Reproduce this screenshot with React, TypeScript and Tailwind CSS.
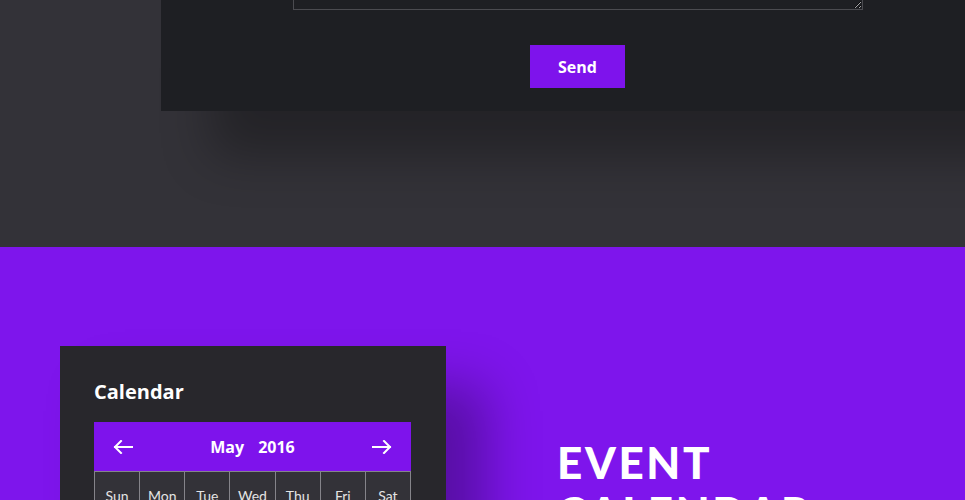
import React from "react";

const DAYS = ["Sun", "Mon", "Tue", "Wed", "Thu", "Fri", "Sat"];

const Arrow = ({ dir }: { dir: "left" | "right" }) => (
  <svg width="20" height="14" viewBox="0 0 20 14" fill="none" stroke="white" strokeWidth="2" strokeLinecap="square">
    {dir === "left" ? (
      <>
        <path d="M2 7h17" />
        <path d="M8 1L2 7l6 6" />
      </>
    ) : (
      <>
        <path d="M1 7h17" />
        <path d="M12 1l6 6-6 6" />
      </>
    )}
  </svg>
);

const App = () => {
  return (
    <div className="w-full overflow-hidden font-['Lato',sans-serif]">
      {/* Contact form tail */}
      <section className="h-[247px] bg-[#333238]">
        <div className="ml-[161px] w-[834px] h-[111px] bg-[#1e1f23] shadow-[50px_45px_50px_rgba(0,0,0,0.3)]">
          <div className="ml-[132px] w-[570px] flex flex-col">
            <div className="h-[10px] overflow-hidden flex flex-col justify-end">
              <textarea
                className="block w-full h-[120px] shrink-0 bg-[#1e1f23] border border-[#4b4b50] resize-y outline-none"
                defaultValue=""
              />
            </div>
            <button className="self-center mt-[35px] mr-[1px] w-[95px] h-[43px] bg-[#7e13ec] text-white text-[16px] font-bold font-['Open_Sans',sans-serif]">
              Send
            </button>
          </div>
        </div>
      </section>

      {/* Events */}
      <section className="h-[253px] bg-[#7e15ec] pt-[99px] pl-[60px] flex items-start">
        <div className="w-[386px] h-[300px] shrink-0 bg-[#28272c] pl-[34px] pr-[35px] pt-[34px] shadow-[40px_40px_50px_rgba(0,0,0,0.3)]">
          <h3 className="text-white text-[20px] font-bold font-['Open_Sans',sans-serif] leading-[24px]">
            Calendar
          </h3>
          <div className="mt-[18px] h-[49px] bg-[#7e13ec] flex items-center justify-between px-[19px]">
            <Arrow dir="left" />
            <div className="flex gap-[14px] text-white text-[16px] font-bold font-['Open_Sans',sans-serif]">
              <span>May</span>
              <span>2016</span>
            </div>
            <Arrow dir="right" />
          </div>
          <div className="grid grid-cols-7 border-l border-t border-[#85848a]">
            {DAYS.map((d) => (
              <div
                key={d}
                className="h-[46px] bg-[#333238] border-r border-b border-[#85848a] flex items-center justify-center pt-[2px] text-[14px] text-[#e4e4e4]"
              >
                {d}
              </div>
            ))}
          </div>
        </div>
        <div className="ml-[111px] mt-[91px]">
          <h2 className="text-white text-[44px] font-black tracking-[0.06em] leading-[50px]">
            EVENT
            <br />
            CALENDAR
          </h2>
        </div>
      </section>
    </div>
  );
};

export default App;
